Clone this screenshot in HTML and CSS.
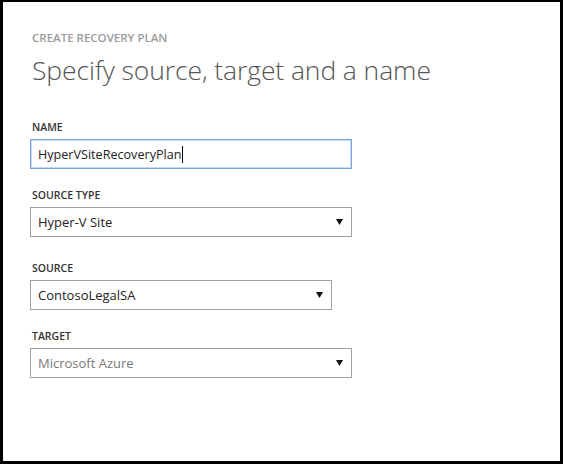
FILE: index.html
```html
<!DOCTYPE html>
<html>
<head>
<meta charset="utf-8">
<link rel="stylesheet" href="styles.css">
</head>
<body>
<div class="frame">
  <div class="eyebrow">CREATE RECOVERY PLAN</div>
  <h1 class="title">Specify source, target and a name</h1>
  <div class="form">
    <div class="field">
      <div class="label">NAME</div>
      <div class="input focused wide"><span>HyperVSiteRecoveryPlan</span><span class="caret"></span></div>
    </div>
    <div class="field">
      <div class="label">SOURCE TYPE</div>
      <div class="input select wide"><span>Hyper-V Site</span><svg class="arrow" width="7" height="6" viewBox="0 0 7 6"><path d="M0 0H7L3.5 6Z" fill="#111"/></svg></div>
    </div>
    <div class="field spaced">
      <div class="label">SOURCE</div>
      <div class="input select narrow"><span>ContosoLegalSA</span><svg class="arrow" width="7" height="6" viewBox="0 0 7 6"><path d="M0 0H7L3.5 6Z" fill="#111"/></svg></div>
    </div>
    <div class="field">
      <div class="label">TARGET</div>
      <div class="input select wide disabled"><span>Microsoft Azure</span><svg class="arrow" width="7" height="6" viewBox="0 0 7 6"><path d="M0 0H7L3.5 6Z" fill="#111"/></svg></div>
    </div>
  </div>
</div>
</body>
</html>
```

FILE: styles.css
```css
html, body {
  margin: 0;
  padding: 0;
  background: #fff;
}
body {
  font-family: "Open Sans", "Noto Sans", "Liberation Sans", sans-serif;
}
.frame {
  box-sizing: border-box;
  width: 563px;
  height: 464px;
  border: 3px solid #000;
  border-top-width: 2px;
  padding: 28px 0 0 27px;
}
.eyebrow {
  margin-left: 2px;
  font-size: 11.5px;
  font-weight: 600;
  color: #9b9b9b;
  line-height: 15px;
  letter-spacing: 0;
}
.title {
  margin: 8px 0 0 2px;
  font-size: 26.5px;
  font-weight: 300;
  color: #555;
  line-height: 34px;
  letter-spacing: -0.1px;
}
.form {
  display: flex;
  flex-direction: column;
  gap: 19px;
  margin-top: 33px;
}
.field {
  display: flex;
  flex-direction: column;
  gap: 5px;
}
.field.spaced {
  margin-top: 5px;
}
.label {
  margin-left: 2px;
  font-size: 10.5px;
  font-weight: 600;
  color: #333;
  line-height: 14px;
}
.input {
  box-sizing: border-box;
  height: 30px;
  border: 1px solid #a0a0a0;
  display: flex;
  align-items: center;
  padding: 0 8px 0 7px;
  font-size: 13px;
  color: #222;
}
.wide { width: 322px; }
.narrow { width: 302px; }
.focused {
  border-color: #7ba4e0;
  box-shadow: inset 0 0 0 1px #c7d9f3;
  font-size: 12.6px;
}
.caret {
  width: 1px;
  height: 17px;
  background: #000;
  margin-left: 1px;
}
.select {
  justify-content: space-between;
}
.disabled { color: #7a7a7a; }
.arrow { display: block; }
```
